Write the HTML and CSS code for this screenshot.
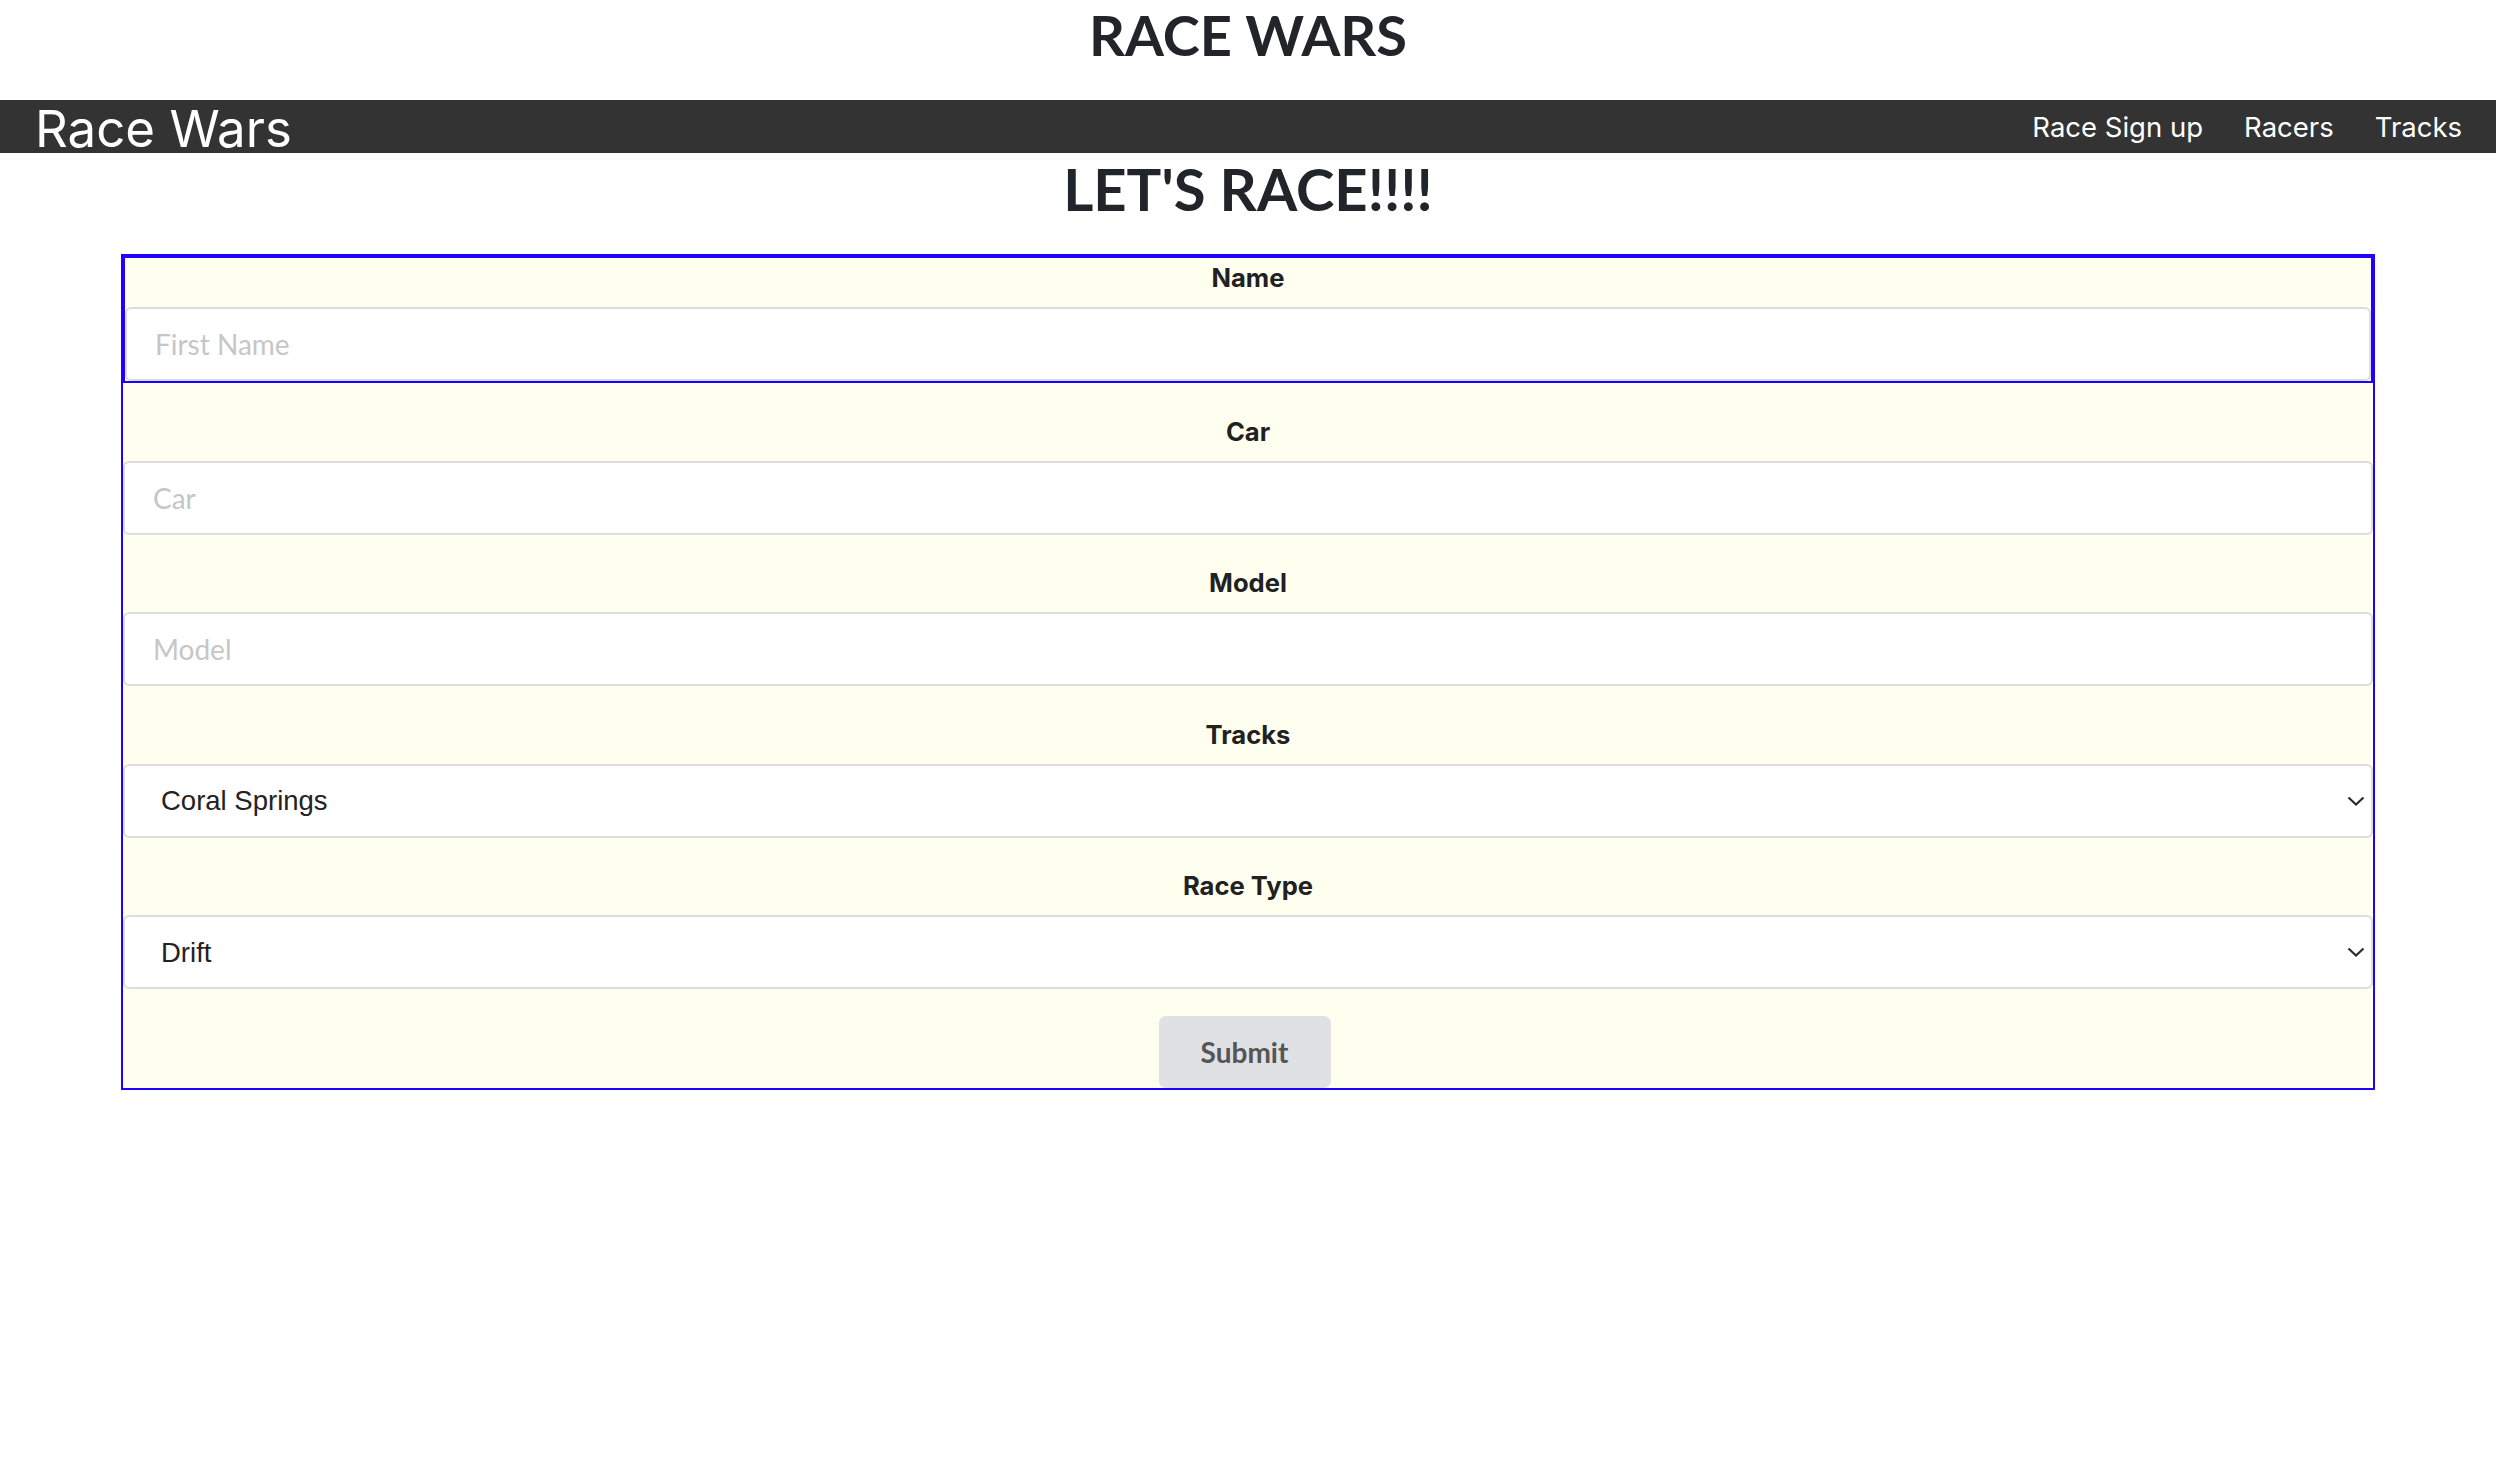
FILE: index.html
```html
<!DOCTYPE html>
<html lang="en">
<head>
<meta charset="utf-8">
<title>Race Wars</title>
<link rel="stylesheet" href="styles.css">
</head>
<body>
<h1 class="site-title">RACE WARS</h1>
<nav class="navbar">
  <a class="brand" href="#">Race Wars</a>
  <ul class="nav-links">
    <li><a href="#">Race Sign up</a></li>
    <li><a href="#">Racers</a></li>
    <li><a href="#">Tracks</a></li>
  </ul>
</nav>
<h1 class="page-title">LET'S RACE!!!!</h1>
<form class="race-form">
  <div class="field field-first">
    <label for="name">Name</label>
    <input id="name" class="text-input" type="text" placeholder="First Name">
  </div>
  <div class="field">
    <label for="car">Car</label>
    <input id="car" class="text-input" type="text" placeholder="Car">
  </div>
  <div class="field">
    <label for="model">Model</label>
    <input id="model" class="text-input" type="text" placeholder="Model">
  </div>
  <div class="field">
    <label for="tracks">Tracks</label>
    <div class="select-wrap">
      <select id="tracks" class="select-input">
        <option>Coral Springs</option>
      </select>
      <svg class="chevron" width="18" height="10" viewBox="0 0 18 10"><polyline points="1.5,1.5 9,8.5 16.5,1.5" fill="none" stroke="#2b2b2b" stroke-width="2.2"/></svg>
    </div>
  </div>
  <div class="field">
    <label for="racetype">Race Type</label>
    <div class="select-wrap">
      <select id="racetype" class="select-input">
        <option>Drift</option>
      </select>
      <svg class="chevron" width="18" height="10" viewBox="0 0 18 10"><polyline points="1.5,1.5 9,8.5 16.5,1.5" fill="none" stroke="#2b2b2b" stroke-width="2.2"/></svg>
    </div>
  </div>
  <div class="actions">
    <button type="button" class="submit-btn">Submit</button>
  </div>
</form>
</body>
</html>
```

FILE: styles.css
```css
html, body {
  margin: 0;
  padding: 0;
  background: #ffffff;
}

body {
  font-family: Lato, "Open Sans", sans-serif;
  color: #212529;
}

.site-title {
  margin: 0 0 30px;
  font-family: Lato, sans-serif;
  font-weight: 700;
  font-size: 56px;
  line-height: 70px;
  text-align: center;
  color: #212529;
}

.navbar {
  display: flex;
  align-items: flex-start;
  justify-content: space-between;
  height: 53px;
  background: #333333;
  padding: 0 34px 0 35px;
}

.brand {
  font-family: Inter, Roboto, sans-serif;
  font-weight: 400;
  font-size: 51px;
  line-height: 57px;
  color: #ffffff;
  text-decoration: none;
  white-space: nowrap;
}

.nav-links {
  display: flex;
  gap: 41px;
  margin: 0;
  padding: 0;
  list-style: none;
}

.nav-links a {
  display: block;
  font-family: Inter, Roboto, sans-serif;
  font-weight: 400;
  font-size: 27.5px;
  line-height: 55px;
  color: #ffffff;
  text-decoration: none;
  white-space: nowrap;
}

.page-title {
  margin: 1px 0 30px;
  font-family: Lato, sans-serif;
  font-weight: 700;
  font-size: 58px;
  line-height: 70px;
  text-align: center;
  color: #212529;
}

.race-form {
  margin: 0 121px;
  border: 2px solid #2000ff;
  background: #fffff0;
}

.field {
  margin-top: 28.5px;
}

.field-first {
  margin-top: 0;
  border: 2px solid #2000ff;
}

.field label {
  display: block;
  padding-top: 2px;
  margin-bottom: 11px;
  font-family: Inter, Roboto, sans-serif;
  font-weight: 700;
  font-size: 25.6px;
  line-height: 36px;
  text-align: center;
  color: #212121;
}

.text-input {
  display: block;
  box-sizing: border-box;
  width: 100%;
  height: 74px;
  margin: 0;
  padding: 0 28px;
  border: 2px solid #dddddd;
  border-radius: 6px;
  background: #ffffff;
  font-family: Lato, sans-serif;
  font-size: 28px;
  color: #212529;
  outline: none;
}

.text-input::placeholder {
  color: #c6c6c6;
}

.select-wrap {
  position: relative;
}

.select-input {
  display: block;
  box-sizing: border-box;
  width: 100%;
  height: 74px;
  margin: 0;
  padding: 0 40px 0 36px;
  border: 2px solid #dddddd;
  border-radius: 6px;
  background: #ffffff;
  font-family: "Liberation Sans", Arial, sans-serif;
  font-size: 27.5px;
  color: #222222;
  -webkit-appearance: none;
  appearance: none;
  outline: none;
}

.chevron {
  position: absolute;
  right: 8px;
  top: 50%;
  margin-top: -5px;
  pointer-events: none;
}

.actions {
  display: flex;
  justify-content: center;
  padding: 27px 7px 0 0;
}

.submit-btn {
  box-sizing: border-box;
  width: 172px;
  height: 72px;
  margin: 0;
  padding: 0;
  border: none;
  border-radius: 7px;
  background: #e0e1e4;
  font-family: Lato, sans-serif;
  font-weight: 700;
  font-size: 28px;
  color: #555555;
}
```
